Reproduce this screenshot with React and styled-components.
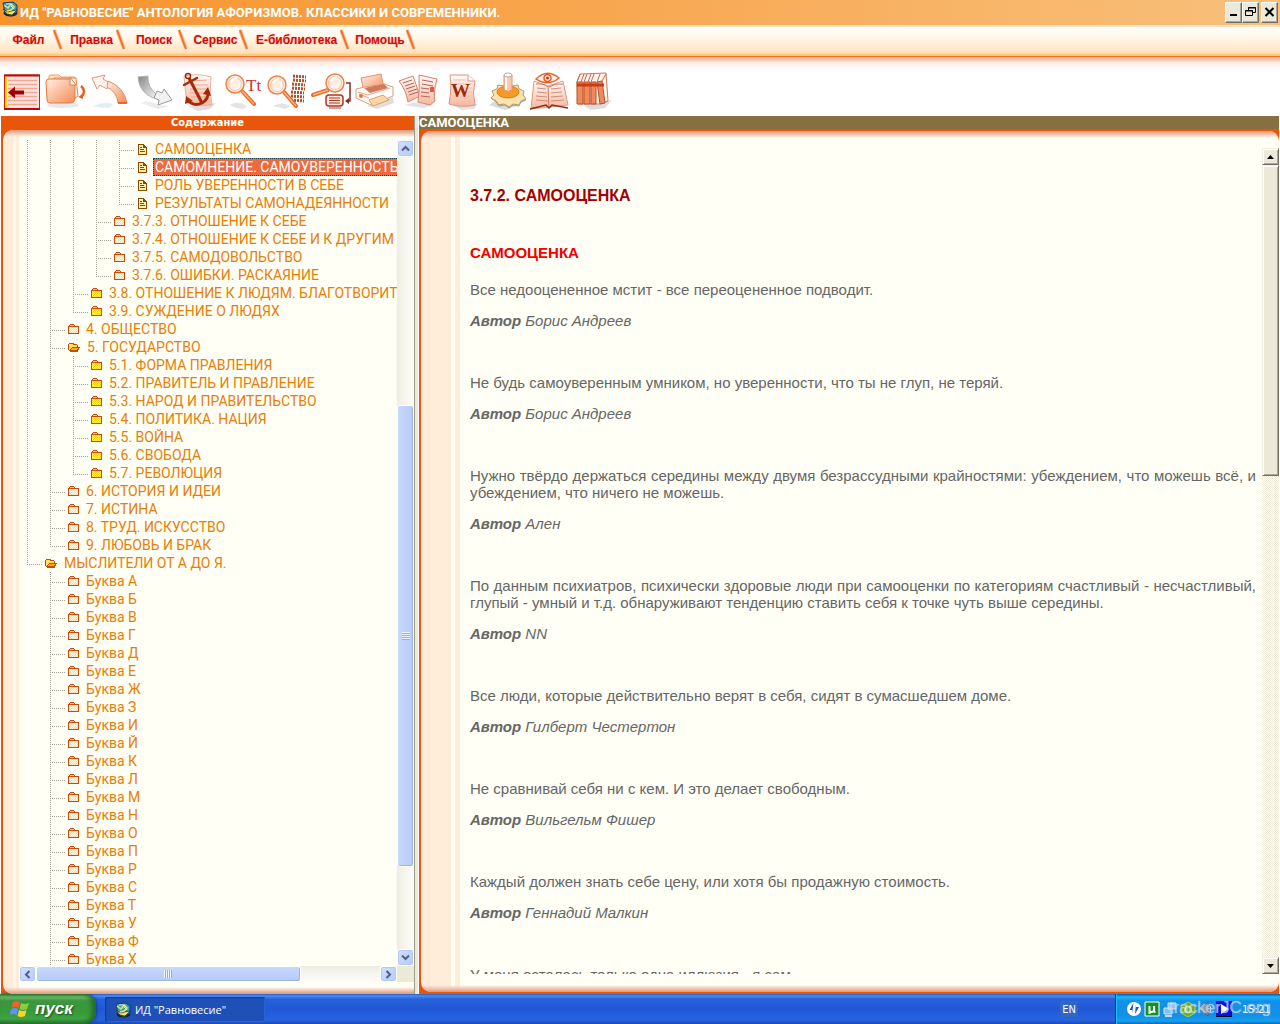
import styled, { createGlobalStyle, css } from "styled-components";
import { useState } from "react";

const GlobalStyle = createGlobalStyle`
  * {
    box-sizing: border-box;
  }
  body {
    margin: 0;
    font-family: "Liberation Sans", Arial, sans-serif;
    background: #fff;
  }
  button {
    border: 0;
    padding: 0;
    background: none;
    font: inherit;
  }
  a {
    color: inherit;
    text-decoration: none;
  }
`;

const Window = styled.div`
  display: flex;
  flex-direction: column;
  height: 100vh;
  overflow: hidden;
`;

/* ---------- title bar ---------- */

const TitleBar = styled.header`
  display: flex;
  align-items: center;
  height: 25px;
  padding: 0 2px;
  background: linear-gradient(to right, #f7932a, #f8a44b 40%, #f8c07b);
  > svg {
    align-self: flex-start;
    margin-top: 1px;
  }
  h1 {
    flex: 1;
    margin: 0 0 0 2px;
    color: #fff;
    font-family: Roboto, sans-serif;
    font-size: 13px;
    font-weight: 700;
    white-space: nowrap;
  }
`;

const WindowButton = styled.button`
  width: 17px;
  height: 21px;
  margin-left: ${(props) => (props.$apart ? "2px" : "0")};
  background: #ece9d8;
  border: 1px solid;
  border-color: #fff #716f64 #716f64 #fff;
  box-shadow: inset -1px -1px #aca899;
  svg {
    display: block;
    margin: 0 auto 2px;
  }
`;

/* ---------- menu ---------- */

const MenuBar = styled.nav`
  display: flex;
  height: 37px;
  padding-bottom: 4px;
  background: linear-gradient(
    to bottom,
    #ffe3c4 0,
    #ffe3c4 2px,
    #fffefa 2px,
    #fff8ea 13px,
    #ffe2bc 28px,
    #fdc983 29px,
    #fdc983 31px,
    #ea7a2c 31px,
    #e57020 32px,
    #e8a98a 32px,
    #f3c7b4 35px,
    #fbe3da 37px
  );
`;

const MenuItem = styled.button`
  display: flex;
  align-items: center;
  width: ${(props) => props.$width}px;
  height: 30px;
  color: #d00a0a;
  font-size: 12px;
  font-weight: 700;
  text-shadow: 0 0 2px #ffb5a0;
  span {
    flex: 1;
    padding-left: 4px;
    text-align: center;
  }
`;

/* ---------- tool bar ---------- */

const ToolBar = styled.div`
  display: flex;
  flex: none;
  height: 54px;
  padding-top: 10px;
  background: linear-gradient(to bottom, #fdebe5, #fff 8px);
`;

const Tool = styled.button`
  width: 44px;
  height: 40px;
  svg {
    display: block;
  }
`;

/* ---------- panels ---------- */

const Panels = styled.main`
  display: flex;
  flex: 1;
  min-height: 0;
  padding: 0 1px;
`;

const Panel = styled.section`
  display: flex;
  flex-direction: column;
  flex: ${(props) => (props.$side ? "0 0 413px" : "1")};
  min-width: 0;
  background: #e8560b;
`;

const PanelTitle = styled.h2`
  height: 13px;
  margin: 0 0 ${(props) => (props.$active ? "2px" : "1px")};
  color: #fff;
  background: ${(props) => (props.$active ? "#867042" : "#e8560b")};
  text-align: ${(props) => (props.$active ? "left" : "center")};
  font-family: ${(props) =>
    props.$active ? "Roboto" : '"DejaVu Sans Condensed"'}, sans-serif;
  font-size: ${(props) => (props.$active ? "13px" : "11px")};
  font-weight: 700;
  line-height: 14px;
`;

const Splitter = styled.div`
  width: 5px;
  background: #ece9d8;
  border-left: 1px solid #9d9d8f;
  border-right: 1px solid #fff;
`;

const Sheet = styled.div`
  position: relative;
  display: flex;
  flex: 1;
  min-height: 0;
  margin-left: 2px;
  overflow: hidden;
  background: #fffff5;
  ${(props) =>
    props.$side
      ? css`
          padding: 10px 0 12px 16px;
          border-radius: 10px 0 0 10px;
          background: linear-gradient(
            to right,
            #ffedd9 10px,
            #fff6ee 10px,
            #fff6ee 13px,
            #ffedd9 13px,
            #ffedd9 16px,
            #fffff5 16px
          );
        `
      : css`
          padding: 17px 0 18px 39px;
          margin-bottom: 2px;
          border-radius: 10px;
          background: linear-gradient(
            to right,
            #ffedd9 30px,
            #fffff5 30px,
            #fffff5 34px,
            #ffedd9 34px,
            #ffedd9 39px,
            #fffff5 39px
          );
        `}
  &::before,
  &::after {
    content: "";
    position: absolute;
    left: 0;
    right: 0;
    height: 7px;
    background: linear-gradient(to bottom, #dc9775, #f3cdbb 4px, #fff6f000);
  }
  &::before {
    top: 0;
  }
  &::after {
    bottom: 0;
    transform: scaleY(-1);
  }
`;

/* ---------- tree ---------- */

const TreeGrid = styled.div`
  display: grid;
  grid-template-columns: 1fr 17px;
  grid-template-rows: 1fr 16px;
  flex: 1;
  min-width: 0;
  min-height: 0;
`;

const Tree = styled.ul`
  margin: 0;
  padding: 0 0 0 8px;
  overflow: hidden;
  list-style: none;
`;

const TreeRow = styled.li`
  display: flex;
  height: 18px;
  white-space: nowrap;
  svg {
    flex: none;
    margin: 4px 5px 0 0;
  }
`;

const Guide = styled.span`
  flex: none;
  width: 23px;
  background: ${(props) =>
    props.$line
      ? "repeating-linear-gradient(to bottom, #a5a294 0 1px, transparent 1px 2px) 0 0 / 1px 100% no-repeat"
      : "none"};
`;

const Elbow = styled.span`
  flex: none;
  width: ${(props) => (props.$wide ? "19px" : "18px")};
  background: repeating-linear-gradient(
        to bottom,
        #a5a294 0 1px,
        transparent 1px 2px
      )
      0 0 / 1px ${(props) => (props.$last ? "11px" : "100%")} no-repeat,
    repeating-linear-gradient(to right, #a5a294 0 1px, transparent 1px 2px) 0
      10px / 15px 1px no-repeat;
`;

const TreeLink = styled.a`
  height: 18px;
  padding: 0 2px;
  color: ${(props) => (props.$selected ? "#fff" : "#e67e0a")};
  background: ${(props) => (props.$selected ? "#ec6b3e" : "none")};
  outline: ${(props) => (props.$selected ? "1px dotted #134050" : "none")};
  outline-offset: -1px;
  font-family: Roboto, sans-serif;
  font-size: 14px;
  font-weight: 400;
  line-height: 18px;
`;

/* ---------- scroll bars ---------- */

const Scroll = styled.div`
  display: flex;
  flex-direction: ${(props) => (props.$across ? "row" : "column")};
  background: linear-gradient(
    to ${(props) => (props.$across ? "bottom" : "right")},
    #eeede5,
    #fdfdf8
  );
`;

const ScrollButton = styled.button`
  display: flex;
  align-items: center;
  justify-content: center;
  flex: 0 0 17px;
  background: linear-gradient(135deg, #d3e0ff, #b3caf9);
  border: 1px solid #fff;
  border-radius: 3px;
  box-shadow: inset 0 0 0 1px #b5c8f0;
`;

const Gap = styled.div`
  flex: ${(props) => props.$share} 0 0;
`;

const Thumb = styled.div`
  display: flex;
  align-items: center;
  justify-content: center;
  flex: ${(props) => props.$share} 0 0;
  border: 1px solid #fff;
  border-radius: 3px;
  background: linear-gradient(
    to ${(props) => (props.$across ? "bottom" : "right")},
    #c9d8fc,
    #b5cbf9
  );
  box-shadow: inset -1px -1px #9fb5dd;
  &::after {
    content: "";
    width: 8px;
    height: 8px;
    background: repeating-linear-gradient(
      to ${(props) => (props.$across ? "right" : "bottom")},
      #eef4fe 0 1px,
      #8cb0f8 1px 2px
    );
  }
`;

const Corner = styled.div`
  background: #ece9d8;
`;

const ClassicScroll = styled.div`
  display: flex;
  flex-direction: column;
  width: 17px;
  background: repeating-conic-gradient(#fff 0 25%, #ece9d8 0 50%) 0 0 / 2px 2px;
`;

const raised = css`
  background: #ece9d8;
  border: 1px solid;
  border-color: #f1efe2 #716f64 #716f64 #f1efe2;
  box-shadow: inset 1px 1px #fff, inset -1px -1px #aca899;
`;

const ClassicButton = styled.button`
  display: flex;
  align-items: center;
  justify-content: center;
  flex: 0 0 17px;
  ${raised}
`;

const ClassicThumb = styled.div`
  flex: ${(props) => props.$share} 0 0;
  ${raised}
`;

/* ---------- article ---------- */

const Article = styled.article`
  flex: 1;
  min-width: 0;
  padding: 38px 6px 0 10px;
  overflow: hidden;
  color: #666;
  font-size: 15px;
  line-height: 17px;
  h3 {
    margin: 0 0 38px;
    color: #a50000;
    font-size: 16px;
    line-height: 20px;
  }
  h4 {
    margin: 0 0 20px;
    color: #f00000;
    font-size: 15px;
    line-height: 17px;
  }
`;

const Quote = styled.blockquote`
  margin: 0 0 45px;
  p {
    margin: 0 0 14px;
    text-align: justify;
  }
  footer {
    font-style: italic;
  }
`;

/* ---------- task bar ---------- */

const TaskBar = styled.footer`
  display: flex;
  flex: none;
  align-items: stretch;
  height: 30px;
  background: linear-gradient(
    to bottom,
    #2a5fc4 0,
    #4a8df0 2px,
    #2961dc 5px,
    #2258d6 15px,
    #2663e0 26px,
    #1b49b4 30px
  );
  color: #fff;
  font-family: "DejaVu Sans Condensed", sans-serif;
  font-size: 11px;
`;

const StartButton = styled.button`
  display: flex;
  align-items: center;
  width: 96px;
  padding-left: 10px;
  border-radius: 0 10px 12px 0;
  background: linear-gradient(
    to bottom,
    #2f7d33 0,
    #6dbb6b 3px,
    #3c953f 7px,
    #389a3a 18px,
    #3fa442 25px,
    #2a7430 30px
  );
  box-shadow: inset -4px 0 5px #1f6a28, 1px 0 3px #153d90;
  color: #fff;
  font-family: "Liberation Sans", Arial, sans-serif;
  font-size: 17px;
  font-style: italic;
  font-weight: 700;
  text-shadow: 1px 1px 2px #174a18;
  svg {
    margin-right: 5px;
  }
`;

const TaskButton = styled.button`
  display: flex;
  align-items: center;
  gap: 4px;
  width: 160px;
  margin: 3px 0 2px 9px;
  padding-left: 10px;
  border-radius: 2px;
  background: #1e50b8;
  box-shadow: inset 1px 1px 1px #123a90, inset -1px -1px #2c62cc;
  color: #fff;
  font-family: "Open Sans", sans-serif;
  font-size: 11px;
`;

const Language = styled.button`
  align-self: center;
  height: 16px;
  margin: 0 37px 0 auto;
  padding: 0 2px;
  background: #2f68c4;
  color: #fff;
`;

const Tray = styled.div`
  position: relative;
  display: flex;
  align-items: center;
  gap: 2px;
  width: 165px;
  padding-left: 10px;
  border-left: 1px solid #0d2f8a;
  background: linear-gradient(
    to bottom,
    #0c59b9 0,
    #18b9fa 3px,
    #1490ea 7px,
    #1290e8 22px,
    #17a1f0 27px,
    #0c62b8 30px
  );
  box-shadow: inset 1px 0 #1cc4fb;
  time {
    margin-left: 8px;
  }
`;

const Watermark = styled.span`
  position: absolute;
  top: 4px;
  right: 9px;
  color: #a9cdebaa;
  font-family: "Liberation Sans", Arial, sans-serif;
  font-size: 17px;
  text-shadow: 0 0 1px #ffffff90;
`;

/* ---------- icons ---------- */

const GlobeIcon = () => (
  <svg width="16" height="16" viewBox="0 0 16 16">
    <ellipse cx="8.500" cy="12" rx="7" ry="3.500" fill="#1c1c30" />
    <path d="M1 2l10-1 4 3v7l-6 4-6-3z" fill="#2f9fc4" stroke="#123c63" />
    <path d="M1 8l5 3 3-1 6-1-5 5-5-1z" fill="#f2e05a" stroke="#22301c" strokeWidth=".7" />
    <path d="M2 4l4 3 3-4 3 3-3 3-4 1" stroke="#f2e05a" fill="none" strokeWidth="1.500" />
    <path d="M4 3q4-1 6 1M9 5l3 3" stroke="#d5f2ff" fill="none" />
  </svg>
);

const Slash = () => (
  <svg width="10" height="22" viewBox="0 0 10 22">
    <path d="M1 1L8 20" stroke="#fbc7a4" strokeWidth="4" />
    <path d="M1 1L8 20" stroke="#f0702c" strokeWidth="2" />
  </svg>
);

const FolderIcon = ({ bright }) => (
  <svg width="11" height="10" viewBox="0 0 11 10" shapeRendering="crispEdges">
    <path d="M2 0h4v1h1v1h4v8H0V2h1V1h1z" fill="#cc4a08" />
    <path d="M2 1h4v1H2z" fill="#ffc890" />
    <path d="M1 3h9v6H1z" fill={bright ? "#ffd814" : "#ffe09a"} />
    <path
      d="M1 3.500h9M2 4.500h8M1 5.500h9M2 6.500h8M1 7.500h9M2 8.500h8"
      stroke={bright ? "#fff070" : "#fff8dc"}
      strokeDasharray="1 1"
    />
  </svg>
);

const OpenFolderIcon = () => (
  <svg width="12" height="11" viewBox="0 0 12 11" shapeRendering="crispEdges">
    <path d="M1 1h5v1h3v1h1v2h2v1h-1v2h-1v2H2V9H1V8H0V2h1z" fill="#cc4a08" />
    <path d="M1 2h4v1h4v2H4v1H3v1H2v1H1z" fill="#ffe45c" />
    <path d="M4 6h6v1H9v1H3V7h1z" fill="#ffae00" />
  </svg>
);

const PageIcon = () => (
  <svg width="10" height="11" viewBox="0 0 10 11" shapeRendering="crispEdges">
    <path d="M0 0h6v1h1v1h1v1h1v8H0z" fill="#8f4a00" />
    <path d="M1 1h4v3h3v6H1z" fill="#fff2a8" />
    <path d="M6 2h1v1H6zM2 3h2v1H2zM2 5h4v1H2zM2 7h5v1H2z" fill="#8f4a00" />
  </svg>
);

const Chevron = ({ turn }) => (
  <svg width="9" height="9" viewBox="0 0 9 9" transform={`rotate(${turn})`}>
    <path d="M1 6.500L4.500 3 8 6.500" fill="none" stroke="#4d6185" strokeWidth="2" />
  </svg>
);

const Triangle = ({ turn }) => (
  <svg width="7" height="4" viewBox="0 0 7 4" transform={`rotate(${turn})`}>
    <path d="M0 4L3.500 0 7 4z" fill="#000" />
  </svg>
);

const ToolSvg = ({ children }) => (
  <svg width="44" height="40" viewBox="0 0 44 40" fill="none">
    {children}
  </svg>
);

const Lens = ({ x, y, r, hx, hy }) => {
  const nx = x + (hx > x ? 7 : -7);
  return (
    <>
      <path d={`M${hx} ${hy}L${nx} ${y + 7}`} stroke="#ee6420" strokeWidth="4" strokeLinecap="round" />
      <path d={`M${hx} ${hy}L${nx} ${y + 7}`} stroke="#ffb880" strokeWidth="1.500" />
      <circle cx={x} cy={y} r={r} fill="#fff0e6" stroke="#f0824a" strokeWidth="1.500" />
      <circle cx={x} cy={y} r={r - 2.5} fill="url(#glass)" stroke="#f9c3a0" />
      <path d={`M${x - 4} ${y - 2}q2-4 6-4`} stroke="#fff" strokeWidth="2" />
    </>
  );
};

const Fades = () => (
  <svg width="0" height="0" style={{ position: "absolute" }}>
    <defs>
      <linearGradient id="warm" x1="0" y1="0" x2="1" y2="1">
        <stop offset="0" stopColor="#fff1e8" />
        <stop offset="1" stopColor="#f58a52" />
      </linearGradient>
      <linearGradient id="glass" x1="0" y1="0" x2="1" y2="1">
        <stop offset="0" stopColor="#fde2d2" />
        <stop offset="1" stopColor="#fffaf6" />
      </linearGradient>
      <linearGradient id="rose" x1="0" y1="0" x2="0" y2="1">
        <stop offset="0" stopColor="#fffaf7" />
        <stop offset="1" stopColor="#f6b6a0" />
      </linearGradient>
      <linearGradient id="steel" x1="0" y1="0" x2="1" y2="1">
        <stop offset="0" stopColor="#858585" />
        <stop offset="1" stopColor="#f5f5f5" />
      </linearGradient>
    </defs>
  </svg>
);

const tools = [
  {
    label: "Содержание",
    icon: (
      <>
        <path d="M4.500 3h35v34h-35z" fill="#ffe4dc" stroke="#d51a10" />
        <path d="M8 8.500h29M8 12.500h29M8 16.500h29M8 20.500h29M8 24.500h29M8 28.500h29M8 32.500h29" stroke="#f3a597" strokeWidth="1.500" />
        <path d="M4 3.500h36M4 37h36" stroke="#b80c08" strokeWidth="2" />
        <path d="M6 5v31" stroke="#ffe100" strokeWidth="2" />
        <path d="M8 20.500l7-6v4h9v4h-9v4z" fill="#a00008" />
      </>
    ),
  },
  {
    label: "Закладки",
    icon: (
      <>
        <ellipse cx="19" cy="33" rx="16" ry="3" fill="#e4e9ee" />
        <path d="M5 8V4q0-1 2-1h8l2 2h14v6" fill="#ffe3b8" stroke="#e9a467" />
        <path d="M10 6h22l2 18-6 4z" fill="#fff3e6" stroke="#e08a50" />
        <path d="M2 10q0-3 3-3h20l6 7v13q-1 4-4 4H6q-3 0-3-3z" fill="url(#warm)" stroke="#e57a3c" />
        <path d="M26 5l6 8h-6z" fill="#fff" stroke="#e57a3c" />
        <path d="M37 14q6 5 0 11" stroke="#ec5c20" strokeWidth="2.500" />
        <path d="M34 25l5-3v5z" fill="#ec5c20" />
      </>
    ),
  },
  {
    label: "Назад",
    icon: (
      <>
        <path d="M5 34q12-5 20-2l-3 4-14-1z" fill="#e3edf1" />
        <path d="M4 6L17 3l-2 4 7 4-3 6-7-4-3 4z" fill="#fff4ee" stroke="#e39478" />
        <path d="M20 9q16 6 19 22h-9q-1-11-11-16z" fill="url(#warm)" stroke="#e58a62" />
        <path d="M30 31h9" stroke="#e8672e" strokeWidth="2" />
      </>
    ),
  },
  {
    label: "Вперёд",
    icon: (
      <>
        <path d="M8 31q10-4 18 2l12 1-12 3z" fill="#ececec" />
        <path d="M6 5l10-1q-1 11 9 19l-4 3Q7 20 6 5z" fill="url(#steel)" stroke="#b2b2b2" />
        <path d="M25 19l5 2 2-4 8 11-14 5 1-5-5-2z" fill="#f1f1f1" stroke="#9b9b9b" />
      </>
    ),
  },
  {
    label: "Якорь",
    icon: (
      <>
        <path d="M12 34l28-3-6 6-12 2z" fill="#dedede" />
        <path d="M8 4q14-3 27 1-2 14 1 28-14 2-25-2Q9 18 8 4z" fill="url(#rose)" stroke="#eab29c" />
        <path d="M15 9l16-1M14 13h18M14 17h18M14 21h18M15 25h17" stroke="#eea58e" />
        <circle cx="12" cy="4" r="2.500" stroke="#a32b0a" strokeWidth="1.500" />
        <path d="M13 6l13 25" stroke="#a32b0a" strokeWidth="3" />
        <path d="M8 13l13-7" stroke="#a32b0a" strokeWidth="2.500" strokeLinecap="round" />
        <path d="M12 28q5 7 14 3 7-4 6-12" stroke="#a32b0a" strokeWidth="3" />
        <path d="M9 32l1-8 7 5zM27 22l5-7 3 9z" fill="#a32b0a" />
      </>
    ),
  },
  {
    label: "Поиск текста",
    icon: (
      <>
        <path d="M10 33q8-5 17 1l-3 3q-8 0-14-4z" fill="#e4e4e4" />
        <Lens x={15} y={12} r={9} hx={34} hy={32} />
        <text x="26" y="19" fill="#c93434" fontFamily="Liberation Serif, serif" fontSize="17">
          Tt
        </text>
      </>
    ),
  },
  {
    label: "Поиск в книгах",
    icon: (
      <>
        <path d="M9 34q8-5 18 0l-6 3z" fill="#e4e4e4" />
        <path d="M29 4l13 1M29 8l13 1M28 12l13 1M28 16l13 1M27 20l13 1M27 24l13 1M27 28l13 1" stroke="#a9502c" strokeWidth="3" strokeDasharray="2 1" />
        <Lens x={13} y={13} r={9} hx={32} hy={34} />
      </>
    ),
  },
  {
    label: "Поиск по разделам",
    icon: (
      <>
        <Lens x={27} y={11} r={9} hx={5} hy={23} />
        <path d="M38 11h4v18h-4" stroke="#8c2c1c" strokeWidth="1.500" />
        <path d="M37 29l4-3v6z" fill="#8c2c1c" />
        <rect x="18" y="23" width="17" height="11" rx="3" fill="#ffe6dc" stroke="#a83c24" strokeWidth="1.500" />
        <path d="M21 26h11M21 28.500h11M21 31h11M21 36h12" stroke="#a83c24" />
      </>
    ),
  },
  {
    label: "Печать",
    icon: (
      <>
        <path d="M15 34l26-9 1 6-17 6z" fill="#dedede" />
        <path d="M9 6l20-4 3 14-20 4z" fill="url(#warm)" stroke="#e2946e" />
        <path d="M4 17l9-2 19-3 9 3v9l-22 9-15-7z" fill="#fff" stroke="#df9a7c" />
        <path d="M6 20l10 3 22-7M7 22l10 4" stroke="#e9a284" />
        <path d="M12 16l20-4 4 4-18 5z" fill="#d27a58" />
        <path d="M17 28l14-5 6 5-16 6z" fill="#ffd7a4" stroke="#e59a62" />
        <circle cx="9" cy="24" r="2" fill="#f36f34" />
      </>
    ),
  },
  {
    label: "Копировать",
    icon: (
      <>
        <path d="M8 33l12-3 18 3-10 3z" fill="#e2e2e2" />
        <path d="M3 9l14-5 7 20-12 6Q10 18 3 9z" fill="url(#rose)" stroke="#d8826a" />
        <path d="M7 11l9-3M9 14l9-3M10 17l9-3M12 20l9-3M13 23l9-3" stroke="#b0675a" />
        <path d="M23 3l18 4q-4 14-2 22l-5 4-12-3q2-14 1-27z" fill="url(#rose)" stroke="#d8826a" />
        <path d="M26 8l11 2M26 12l11 2M25 16l8 1M25 20l8 1M25 24l9 1" stroke="#b0675a" />
        <path d="M34 15h4v5h-4z" fill="#e65a3a" />
      </>
    ),
  },
  {
    label: "Word",
    icon: (
      <>
        <path d="M14 34l24-2-4 5-12 1z" fill="#e2e2e2" />
        <path d="M10 3h18l7 6q-3 12 0 24-14 3-26-1 3-16 1-29z" fill="url(#rose)" stroke="#dc9480" />
        <path d="M28 3v6h7" fill="#fff" stroke="#dc9480" />
        <path d="M13 8h13M13 12h19M13 16h19M13 20h19M13 24h19" stroke="#f1c0b0" />
        <text x="11" y="25" fill="#9c2a0c" fontFamily="Liberation Serif, serif" fontWeight="700" fontSize="19">
          W
        </text>
      </>
    ),
  },
  {
    label: "Настройки",
    icon: (
      <>
        <path d="M5 33l10-7 18 8-12 4z" fill="#dadada" />
        <path
          d="M8 19l5-2 1-4 6 1 4-2 4 2 6-1 1 4 5 2-1 4 3 4-5 2-2 4-6-1-4 3-5-3-6 1-2-4-5-3 3-3z"
          fill="#fbe3b0"
          stroke="#b59768"
        />
        <path d="M8 27l5 3 2 4 6-1 4 3 4-3 6 1 2-4 5-2" stroke="#a89c88" />
        <ellipse cx="24" cy="20" rx="11" ry="6" fill="#f59a24" stroke="#d87c14" />
        <path d="M20 3v15q4 3 8 0V3z" fill="#ffc9a8" stroke="#d99678" />
        <path d="M22 4v14" stroke="#fff" strokeWidth="2" />
        <ellipse cx="24" cy="3" rx="4" ry="2" fill="#fff" stroke="#aaa" />
      </>
    ),
  },
  {
    label: "Просмотр",
    icon: (
      <>
        <path d="M6 9l14 5 15-5 5 24-19 2-18 2z" fill="url(#rose)" stroke="#dd9a80" />
        <path d="M20 14l1 22M8 12q8-1 12 3M35 12q-8-1-14 3" stroke="#c97860" />
        <path d="M9 16l9 1M9 20l10 1M8 24l11 1M8 28l12 1M23 17l10-1M23 21l11-1M23 25l12-1M23 29l13-1" stroke="#cf8f78" />
        <path d="M2 37l16-4 3 3 3-3 16 3" stroke="#8e2e14" strokeWidth="1.500" />
        <path d="M8 7Q19-4 31 6 20 15 8 7z" fill="#fff4ec" stroke="#ec6428" strokeWidth="1.500" />
        <circle cx="19.500" cy="6" r="3.500" fill="#fff" stroke="#ec5018" strokeWidth="1.500" />
        <circle cx="19.500" cy="6" r="1.500" fill="#c8320a" />
      </>
    ),
  },
  {
    label: "Библиотека",
    icon: (
      <>
        <path d="M12 34l28-6-7 8-14 2z" fill="#dcdcdc" />
        <path d="M5 10l3-8 26-1 2 28-8 3H6z" fill="#fff3ec" stroke="#c9785c" />
        <path d="M5 10h6v22H5zM12 10h6v22h-6zM19 10h5v22h-5zM25 10l5-1 3 22-5 1z" fill="#f08a5a" stroke="#b8522c" />
        <path d="M5 10l3-8M9 10l3-8M12 10l3-8M16 10l3-8M19 10l3-8M25 10l3-8M30 9l4-7" stroke="#c06a4c" />
        <path d="M5 13h27" stroke="#cc3c14" strokeWidth="3" />
      </>
    ),
  },
];

/* ---------- data ---------- */

const menu = [
  { text: "Файл", width: 63 },
  { text: "Правка", width: 63 },
  { text: "Поиск", width: 62 },
  { text: "Сервис", width: 61 },
  { text: "Е-библиотека", width: 101 },
  { text: "Помощь", width: 66 },
];

// guides: one character for each outer level, "|" where its line goes on
const nodes = [
  { text: "САМООЦЕНКА", guides: "||||", kind: "page" },
  { text: "САМОМНЕНИЕ. САМОУВЕРЕННОСТЬ", guides: "||||", kind: "page" },
  { text: "РОЛЬ УВЕРЕННОСТИ В СЕБЕ", guides: "||||", kind: "page" },
  { text: "РЕЗУЛЬТАТЫ САМОНАДЕЯННОСТИ", guides: "||||", kind: "page", last: true },
  { text: "3.7.3. ОТНОШЕНИЕ К СЕБЕ", guides: "|||" },
  { text: "3.7.4. ОТНОШЕНИЕ К СЕБЕ И К ДРУГИМ", guides: "|||" },
  { text: "3.7.5. САМОДОВОЛЬСТВО", guides: "|||" },
  { text: "3.7.6. ОШИБКИ. РАСКАЯНИЕ", guides: "|||", last: true },
  { text: "3.8. ОТНОШЕНИЕ К ЛЮДЯМ. БЛАГОТВОРИТЕЛЬНОСТЬ", guides: "||", kind: "bright" },
  { text: "3.9. СУЖДЕНИЕ О ЛЮДЯХ", guides: "||", kind: "bright", last: true },
  { text: "4. ОБЩЕСТВО", guides: "|" },
  { text: "5. ГОСУДАРСТВО", guides: "|", kind: "open" },
  { text: "5.1. ФОРМА ПРАВЛЕНИЯ", guides: "||", kind: "bright" },
  { text: "5.2. ПРАВИТЕЛЬ И ПРАВЛЕНИЕ", guides: "||", kind: "bright" },
  { text: "5.3. НАРОД И ПРАВИТЕЛЬСТВО", guides: "||", kind: "bright" },
  { text: "5.4. ПОЛИТИКА. НАЦИЯ", guides: "||", kind: "bright" },
  { text: "5.5. ВОЙНА", guides: "||", kind: "bright" },
  { text: "5.6. СВОБОДА", guides: "||", kind: "bright" },
  { text: "5.7. РЕВОЛЮЦИЯ", guides: "||", kind: "bright", last: true },
  { text: "6. ИСТОРИЯ И ИДЕИ", guides: "|" },
  { text: "7. ИСТИНА", guides: "|" },
  { text: "8. ТРУД. ИСКУССТВО", guides: "|" },
  { text: "9. ЛЮБОВЬ И БРАК", guides: "|", last: true },
  { text: "МЫСЛИТЕЛИ ОТ А ДО Я.", guides: "", kind: "open", last: true },
  ..."АБВГДЕЖЗИЙКЛМНОПРСТУФХ".split("").map((letter) => ({
    text: `Буква ${letter}`,
    guides: " ",
  })),
];

const quotes = [
  {
    text: "Все недооцененное мстит - все переоцененное подводит.",
    author: "Борис Андреев",
  },
  {
    text: "Не будь самоуверенным умником, но уверенности, что ты не глуп, не теряй.",
    author: "Борис Андреев",
  },
  {
    text: "Нужно твёрдо держаться середины между двумя безрассудными крайностями: убеждением, что можешь всё, и убеждением, что ничего не можешь.",
    author: "Ален",
  },
  {
    text: "По данным психиатров, психически здоровые люди при самооценки по категориям счастливый - несчастливый, глупый - умный и т.д. обнаруживают тенденцию ставить себя к точке чуть выше середины.",
    author: "NN",
  },
  {
    text: "Все люди, которые действительно верят в себя, сидят в сумасшедшем доме.",
    author: "Гилберт Честертон",
  },
  {
    text: "Не сравнивай себя ни с кем. И это делает свободным.",
    author: "Вильгельм Фишер",
  },
  {
    text: "Каждый должен знать себе цену, или хотя бы продажную стоимость.",
    author: "Геннадий Малкин",
  },
  { text: "У меня осталась только одна иллюзия - я сам.", author: "" },
];

const NodeIcon = ({ kind }) => {
  if (kind === "page") return <PageIcon />;
  if (kind === "open") return <OpenFolderIcon />;
  return <FolderIcon bright={kind === "bright"} />;
};

const App = () => {
  const [selected, setSelected] = useState(1);

  return (
    <Window>
      <GlobalStyle />
      <Fades />
      <TitleBar>
        <GlobeIcon />
        <h1>ИД "РАВНОВЕСИЕ" АНТОЛОГИЯ АФОРИЗМОВ. КЛАССИКИ И СОВРЕМЕННИКИ.</h1>
        <WindowButton aria-label="Свернуть">
          <svg width="11" height="11" viewBox="0 0 11 11">
            <path d="M2 9h7" stroke="#000" strokeWidth="2" />
          </svg>
        </WindowButton>
        <WindowButton aria-label="Восстановить">
          <svg width="11" height="11" viewBox="0 0 11 11" fill="none" stroke="#000">
            <path d="M3.500 4V1.500h7v5H8M3 2h8M.500 4.500h7v5h-7zM0 5h8" />
          </svg>
        </WindowButton>
        <WindowButton $apart aria-label="Закрыть">
          <svg width="11" height="11" viewBox="0 0 11 11">
            <path d="M1.500 2l8 8M9.500 2l-8 8" stroke="#000" strokeWidth="2" />
          </svg>
        </WindowButton>
      </TitleBar>

      <MenuBar>
        {menu.map((item) => (
          <MenuItem key={item.text} $width={item.width}>
            <span>{item.text}</span>
            <Slash />
          </MenuItem>
        ))}
      </MenuBar>

      <ToolBar>
        {tools.map((tool) => (
          <Tool key={tool.label} aria-label={tool.label}>
            <ToolSvg>{tool.icon}</ToolSvg>
          </Tool>
        ))}
      </ToolBar>

      <Panels>
        <Panel $side>
          <PanelTitle>Содержание</PanelTitle>
          <Sheet $side>
            <TreeGrid>
              <Tree>
                {nodes.map((node, i) => (
                  <TreeRow key={node.text}>
                    {node.guides.split("").map((g, n) => (
                      <Guide key={n} $line={g === "|"} />
                    ))}
                    <Elbow $last={node.last} $wide={node.kind === "page"} />
                    <NodeIcon kind={node.kind} />
                    <TreeLink
                      href="#"
                      $selected={i === selected}
                      onClick={() => setSelected(i)}
                    >
                      {node.text}
                    </TreeLink>
                  </TreeRow>
                ))}
              </Tree>
              <Scroll>
                <ScrollButton aria-label="Вверх">
                  <Chevron turn={0} />
                </ScrollButton>
                <Gap $share={248} />
                <Thumb $share={461} />
                <Gap $share={82} />
                <ScrollButton aria-label="Вниз">
                  <Chevron turn={180} />
                </ScrollButton>
              </Scroll>
              <Scroll $across>
                <ScrollButton aria-label="Влево">
                  <Chevron turn={270} />
                </ScrollButton>
                <Thumb $across $share={265} />
                <Gap $share={80} />
                <ScrollButton aria-label="Вправо">
                  <Chevron turn={90} />
                </ScrollButton>
              </Scroll>
              <Corner />
            </TreeGrid>
          </Sheet>
        </Panel>
        <Splitter />
        <Panel>
          <PanelTitle $active>САМООЦЕНКА</PanelTitle>
          <Sheet>
            <Article>
              <h3>3.7.2. САМООЦЕНКА</h3>
              <h4>САМООЦЕНКА</h4>
              {quotes.map((quote) => (
                <Quote key={quote.text}>
                  <p>{quote.text}</p>
                  <footer>
                    <b>Автор</b> {quote.author}
                  </footer>
                </Quote>
              ))}
            </Article>
            <ClassicScroll>
              <ClassicButton aria-label="Вверх">
                <Triangle turn={0} />
              </ClassicButton>
              <ClassicThumb $share={310} />
              <Gap $share={482} />
              <ClassicButton aria-label="Вниз">
                <Triangle turn={180} />
              </ClassicButton>
            </ClassicScroll>
          </Sheet>
        </Panel>
      </Panels>

      <TaskBar>
        <StartButton>
          <svg width="20" height="20" viewBox="0 0 20 20">
            <path d="M3 3q4-2 7 0L8.500 9q-3-2-7 0z" fill="#f4602c" />
            <path d="M11 4q4 2 8 0l-2 6q-4 2-7.500 0z" fill="#8ccf3a" />
            <path d="M1.200 10q4-2 7 0L6.500 16q-3-2-7 0z" fill="#5b94f5" />
            <path d="M9 11q4 2 7.500 0L15 17q-4 2-7.500 0z" fill="#fbd12c" />
          </svg>
          пуск
        </StartButton>
        <TaskButton>
          <GlobeIcon />
          ИД "Равновесие"
        </TaskButton>
        <Language>EN</Language>
        <Tray>
          <svg width="16" height="16" viewBox="0 0 16 16">
            <circle cx="8" cy="8" r="7" fill="#fff" />
            <path d="M7.500 2L3.500 9H7l-1 4zM9 13l4-7H9.500L10 3z" fill="#1b56b8" />
          </svg>
          <svg width="16" height="16" viewBox="0 0 16 16">
            <path d="M1 1h14v14H1z" fill="#139222" stroke="#fff" />
            <path d="M5.500 13V5v4q0 2 2 2t2.500-2V5v5q0 1 1.500 1" fill="none" stroke="#fff" strokeWidth="2" />
          </svg>
          <svg width="16" height="16" viewBox="0 0 16 16">
            <path d="M6 2h8v6H6zM2 7h8v6H2z" fill="#7cc2f5" stroke="#d9e2ec" />
            <path d="M3 15h7" stroke="#cfd5dc" strokeWidth="2" />
          </svg>
          <svg width="16" height="16" viewBox="0 0 16 16">
            <path d="M8 1l7 4v7l-7 4-7-4V5z" fill="#6fae1c" stroke="#a9d04c" />
            <circle cx="8" cy="8.500" r="3" fill="none" stroke="#e5f3c0" strokeWidth="1.500" />
          </svg>
          <svg width="16" height="16" viewBox="0 0 16 16">
            <path d="M2 6h3l5-5v14l-5-5H2z" fill="#9a9aa4" stroke="#5e5e6a" />
            <path d="M12 5q2 3 0 6" fill="none" stroke="#ddd" />
          </svg>
          <svg width="16" height="16" viewBox="0 0 16 16">
            <path d="M0 0h16v16H0z" fill="#0a10e0" />
            <path d="M0 15.500h15.500V0" fill="none" stroke="#101018" />
            <path d="M5 3l8 5-8 5z" fill="#fff" />
          </svg>
          <time>15:21</time>
          <Watermark>trackerJC.org</Watermark>
        </Tray>
      </TaskBar>
    </Window>
  );
};

export default App;
